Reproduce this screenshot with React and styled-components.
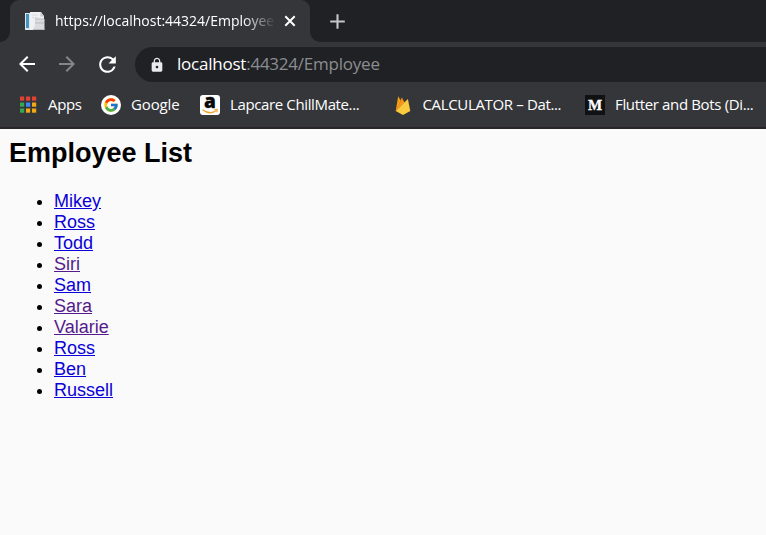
import React from "react";
import styled, { createGlobalStyle } from "styled-components";
import { MdAdd, MdArrowBack, MdArrowForward, MdLock, MdRefresh } from "react-icons/md";
import { FcGoogle } from "react-icons/fc";

const GlobalStyle = createGlobalStyle`
  * { box-sizing: border-box; }
  html, body { margin: 0; height: 100%; overflow: hidden; background: #fafafa; }
`;

const Browser = styled.div`
  display: flex;
  flex-direction: column;
  width: 766px;
  height: 535px;
  overflow: hidden;
  font-family: "Open Sans", "Noto Sans", sans-serif;
  color: #fff;
  svg { display: block; flex: none; overflow: visible; }
`;

const TabStrip = styled.div`
  display: flex;
  flex: none;
  height: 42px;
  padding-left: 10px;
  background: #202124;
`;

const Tab = styled.div`
  position: relative;
  display: flex;
  align-items: center;
  width: 300px;
  height: 42px;
  padding-left: 15px;
  background: #35363a;
  border-radius: 9px 9px 0 0;

  &::before, &::after {
    content: "";
    position: absolute;
    bottom: 0;
    width: 10px;
    height: 10px;
  }
  &::before { left: -10px; background: radial-gradient(circle at 0 0, transparent 9.5px, #35363a 10px); }
  &::after { right: -10px; background: radial-gradient(circle at 100% 0, transparent 9.5px, #35363a 10px); }
`;

const Label = styled.span`
  white-space: nowrap;
  font-size: ${(p) => p.$size || 15}px;
  letter-spacing: ${(p) => p.$track || 0}px;
  line-height: 20px;
`;

const TabTitle = styled(Label)`
  width: 220px;
  margin-left: 10px;
  overflow: hidden;
  mask-image: linear-gradient(to right, #000 188px, transparent 221px);
`;

const NewTab = styled.div`
  display: flex;
  align-items: center;
  margin-left: 15px;
  color: #c4c6c9;
`;

const Toolbar = styled.div`
  display: flex;
  align-items: center;
  flex: none;
  height: 45px;
  padding-left: 15px;
  gap: 16px;
  background: #35363a;
`;

const NavButton = styled.span`
  padding-bottom: 1px;
  color: ${(p) => (p.$disabled ? "#85868a" : "#fff")};
`;

const AddressBar = styled.div`
  display: flex;
  align-items: center;
  flex: 1;
  height: 35px;
  margin-left: -1px;
  padding-left: 14px;
  border-radius: 18px 0 0 18px;
  background: #202124;
`;

const Url = styled(Label)`
  margin-left: 12px;
  padding-bottom: 1px;
`;

const Path = styled.span`
  color: #8b8d91;
`;

const Bookmarks = styled.div`
  display: flex;
  flex: none;
  height: 42px;
  padding-left: 18px;
  background: #35363a;
  border-bottom: 2px solid #292529;
`;

const Bookmark = styled.div`
  display: flex;
  align-items: center;
  gap: 10px;
  flex: none;
  width: ${(p) => p.$width}px;
  padding-bottom: 5px;
`;

const BookmarkLabel = styled(Label)`
  padding-bottom: 2px;
`;

const GoogleBadge = styled.span`
  padding: 2px;
  border-radius: 50%;
  background: #fff;
`;

const Page = styled.main`
  flex: 1;
  padding: 9px;
  background: #fafafa;
  color: #000;
  font-family: "Liberation Sans", Arial, sans-serif;
  font-size: 18px;
  line-height: 21px;
`;

const Heading = styled.h1`
  margin: 0 0 22px;
  font-size: 27px;
  line-height: 31px;
`;

const List = styled.ul`
  margin: 0;
  padding-left: 45px;
`;

const Link = styled.a`
  color: ${(p) => (p.$visited ? "#551a8b" : "#0b00d8")};
  text-decoration: underline;
`;

const Documents = () => (
  <svg width="20" height="20" viewBox="0 0 20 20">
    <path d="M0 2h10v17H0z" fill="#d9e7ef" />
    <path d="M1 3h3v14H1z" fill="#4b91bd" />
    <path d="M5 1h11l3 4v14H5z" fill="#eef0f1" />
    <path d="M15.5 1v4.5H19z" fill="#c3c8cb" />
    <path d="M10 8h9.5v11H8l2-5z" fill="#d9dcde" />
    <path d="M10 8h9M10 12h9M8 18.5h11.5" stroke="#b7bbbd" fill="none" />
    <path d="M7 4h6M7 6.5h6" stroke="#dadddf" />
  </svg>
);

const CloseIcon = styled(({ className }) => (
  <svg className={className} width="12" height="12" viewBox="0 0 12 12">
    <path d="M1.3 1.3l9.4 9.4M10.7 1.3L1.3 10.7" fill="none" stroke="#fff" strokeWidth="2" />
  </svg>
))`
  margin-left: 9px;
`;

const gridColors = ["#e34133", "#e34133", "#e34133", "#35a853", "#4285f4", "#f2a912", "#35a853", "#f2a912", "#f2a912"];

const AppsGrid = () => (
  <svg width="20" height="20" viewBox="0 0 20 20">
    {gridColors.map((c, i) => (
      <rect key={i} x={2 + (i % 3) * 6} y={1.5 + Math.floor(i / 3) * 6} width="4.2" height="4.2" fill={c} />
    ))}
  </svg>
);

const GoogleIcon = () => (
  <GoogleBadge>
    <FcGoogle size={16} />
  </GoogleBadge>
);

const AmazonIcon = () => (
  <svg width="20" height="20" viewBox="0 0 20 20">
    <rect width="20" height="20" rx="3" fill="#fff" />
    <text x="9.8" y="13.4" textAnchor="middle" fontFamily="Open Sans, sans-serif" fontWeight="800" fontSize="19" fill="#080808" stroke="#080808" strokeWidth="0.3">a</text>
    <path d="M2.5 14.8c4.5 3.4 10 3.5 14 .7" fill="none" stroke="#f4a12d" strokeWidth="1.4" />
    <path d="M14.5 14.6l3-.3-.8 3" fill="none" stroke="#f4a12d" />
  </svg>
);

const FirebaseIcon = () => (
  <svg width="20" height="20" viewBox="0 0 20 20">
    <path d="M2.7 16L5.2 1.3l3 5.1z" fill="#f5a313" />
    <path d="M2.7 16L8.8 2.2l2.8 5.3z" fill="#ee8417" />
    <path d="M2.7 16L14.9 3.9 17.3 16 10 20z" fill="#fcca3f" />
    <path d="M2.7 16l8.6-8.6L9 4.8z" fill="#f59920" />
  </svg>
);

const MediumIcon = () => (
  <svg width="20" height="20" viewBox="0 0 20 20">
    <rect width="20" height="20" fill="#101112" />
    <text x="10" y="15" textAnchor="middle" fontFamily="Liberation Serif, serif" fontWeight="700" fontSize="15" fill="#fff" stroke="#fff" strokeWidth="0.3">M</text>
  </svg>
);

const bookmarks = [
  { Icon: AppsGrid, label: "Apps", width: 83, track: -0.35 },
  { Icon: GoogleIcon, label: "Google", width: 99, track: -0.13 },
  { Icon: AmazonIcon, label: "Lapcare ChillMate...", width: 192.5, track: -0.37 },
  { Icon: FirebaseIcon, label: "CALCULATOR – Dat...", width: 192.5, track: -0.35 },
  { Icon: MediumIcon, label: "Flutter and Bots (Di...", width: 180, track: -0.35 },
];

const employees = [
  ["Mikey"], ["Ross"], ["Todd"], ["Siri", true], ["Sam"],
  ["Sara", true], ["Valarie", true], ["Ross"], ["Ben"], ["Russell"],
];

export default function App() {
  return (
    <Browser>
      <GlobalStyle />
      <TabStrip>
        <Tab>
          <Documents />
          <TabTitle $size={14}>https://localhost:44324/Employee</TabTitle>
          <CloseIcon />
        </Tab>
        <NewTab><MdAdd size={25} /></NewTab>
      </TabStrip>
      <Toolbar>
        <NavButton><MdArrowBack size={24} /></NavButton>
        <NavButton $disabled><MdArrowForward size={24} /></NavButton>
        <NavButton><MdRefresh size={25} /></NavButton>
        <AddressBar>
          <MdLock size={16} color="#e8eaed" />
          <Url $size={17} $track={-0.23}>localhost<Path>:44324/Employee</Path></Url>
        </AddressBar>
      </Toolbar>
      <Bookmarks>
        {bookmarks.map(({ Icon, label, width, track }) => (
          <Bookmark key={label} $width={width}>
            <Icon />
            <BookmarkLabel $track={track}>{label}</BookmarkLabel>
          </Bookmark>
        ))}
      </Bookmarks>
      <Page>
        <Heading>Employee List</Heading>
        <List>
          {employees.map(([name, visited], i) => (
            <li key={i}><Link href="#" $visited={visited}>{name}</Link></li>
          ))}
        </List>
      </Page>
    </Browser>
  );
}
